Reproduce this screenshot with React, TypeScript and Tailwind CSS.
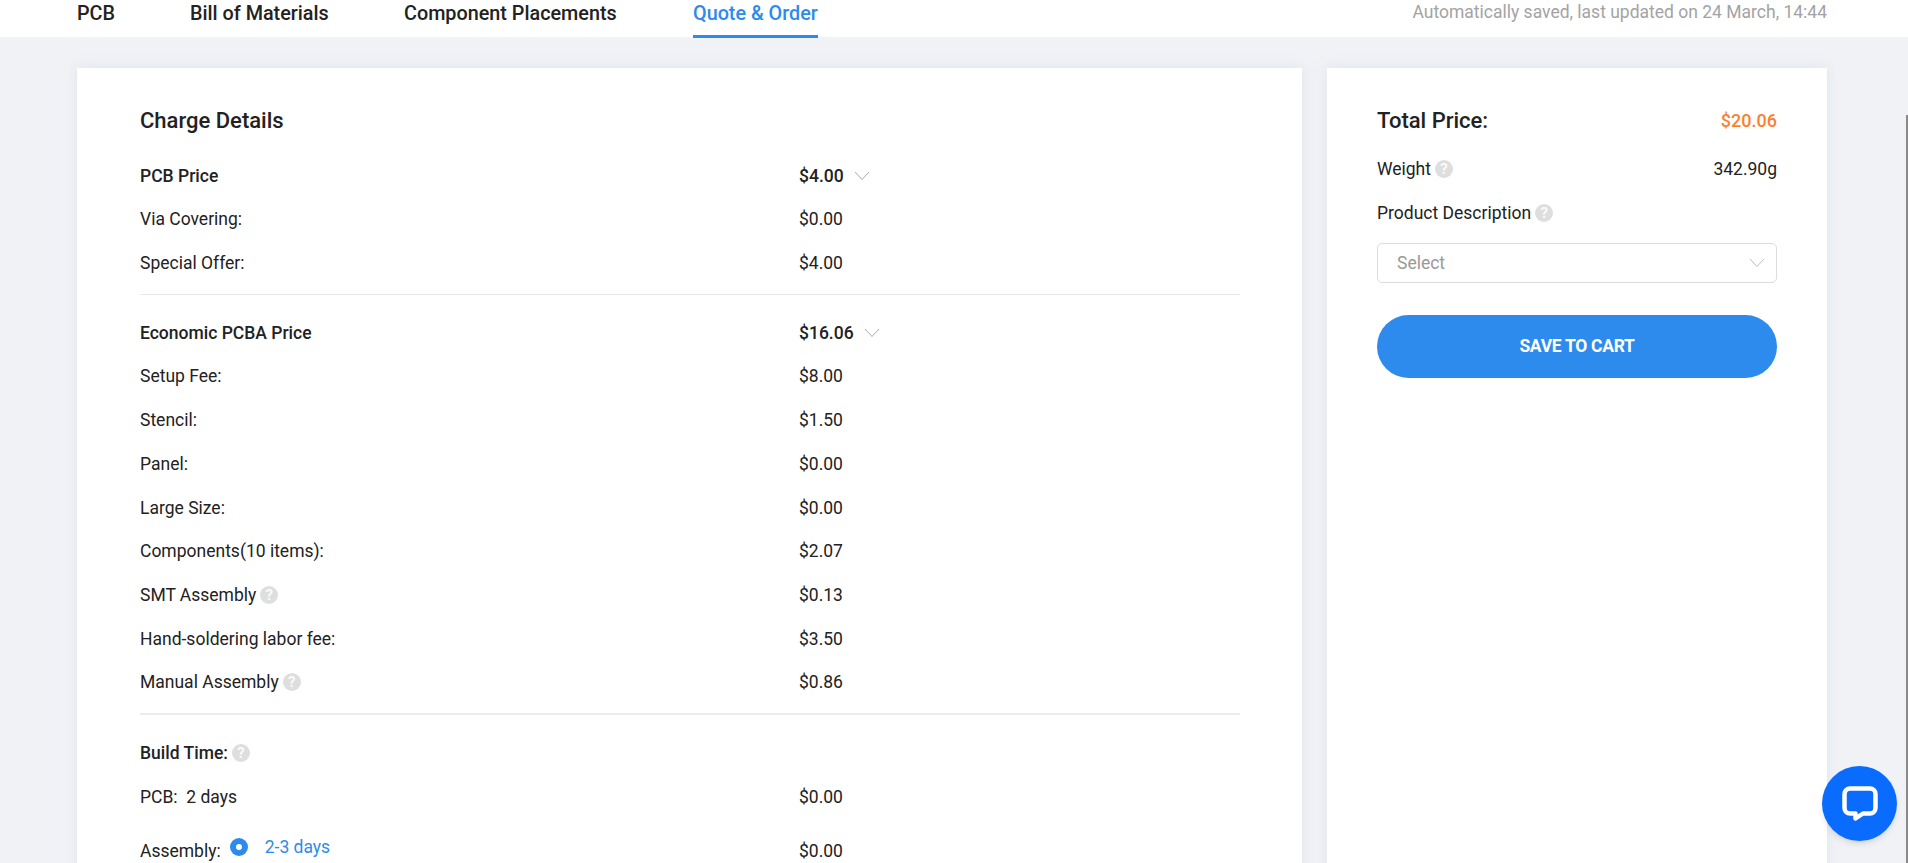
import React from 'react';

function Help() {
  return (
    <span className="inline-flex w-[18px] h-[18px] ml-[4px] rounded-full bg-[#dedede] text-[#fafafa] text-[15px] font-bold items-center justify-center leading-none">?</span>
  );
}

function Chevron({ color }: { color: string }) {
  return (
    <svg width="16" height="10" viewBox="0 0 16 10" fill="none" className="block">
      <path d="M1 1l7 7.5L15 1" stroke={color} strokeWidth="1" />
    </svg>
  );
}

function Row({ label, price, help, bold, open }: { label: string; price?: string; help?: boolean; bold?: boolean; open?: boolean }) {
  return (
    <div className={`flex items-center h-[43.7px] text-[17.5px] text-[#222] ${bold ? 'font-medium' : ''}`}>
      <div className="w-[659px] flex items-center whitespace-pre">
        {label}
        {help && <Help />}
      </div>
      {price && <div>{price}</div>}
      {open && <div className="ml-[10px]"><Chevron color="#aaaaaa" /></div>}
    </div>
  );
}

export default function App() {
  return (
    <div className="relative h-screen overflow-hidden bg-[#f0f2f6] font-['Roboto',sans-serif]">
      <div className="h-[37px] bg-white flex items-start justify-between pl-[77px] pr-[81px]">
        <div className="flex text-[19.8px] font-medium text-[#222] leading-[28px]">
          <div className="w-[113px]">PCB</div>
          <div className="w-[214px]">Bill of Materials</div>
          <div className="w-[289px]">Component Placements</div>
          <div className="h-[38px] text-[#2c8bec] border-b-[3px] border-[#2c8bec]">Quote &amp; Order</div>
        </div>
        <div className="text-[17.5px] text-[#a3a3a3] leading-[24px]">Automatically saved, last updated on 24 March, 14:44</div>
      </div>

      <div className="flex gap-[25px] pl-[77px] pt-[31px]">
        <div className="w-[1225px] h-[900px] bg-white shadow-[0_0_12px_rgba(200,205,220,0.4)] pl-[63px] pr-[62px] pt-[35px]">
          <div className="text-[22px] font-medium text-[#222] leading-[36px] mb-[15px]">Charge Details</div>
          <Row label="PCB Price" price="$4.00" bold open />
          <Row label="Via Covering:" price="$0.00" />
          <Row label="Special Offer:" price="$4.00" />
          <div className="h-[1px] bg-[#e8e8e8] mt-[9px] mb-[16px]" />
          <Row label="Economic PCBA Price" price="$16.06" bold open />
          <Row label="Setup Fee:" price="$8.00" />
          <Row label="Stencil:" price="$1.50" />
          <Row label="Panel:" price="$0.00" />
          <Row label="Large Size:" price="$0.00" />
          <Row label="Components(10 items):" price="$2.07" />
          <Row label="SMT Assembly" price="$0.13" help />
          <Row label="Hand-soldering labor fee:" price="$3.50" />
          <Row label="Manual Assembly" price="$0.86" help />
          <div className="h-[2px] bg-[#ececec] mt-[9px] mb-[16px]" />
          <Row label="Build Time:" help bold />
          <Row label="PCB:  2 days" price="$0.00" />
          <div className="flex items-center h-[64px] text-[17.5px] text-[#222]">
            <div className="w-[659px] flex items-center">
              Assembly:
              <span className="w-[18px] h-[18px] rounded-full bg-[#2c8bec] ml-[9px] -mt-[8px] flex items-center justify-center">
                <span className="w-[6px] h-[6px] rounded-full bg-white" />
              </span>
              <span className="ml-[17px] -mt-[8px] text-[#2c8bec]">2-3 days</span>
            </div>
            <div>$0.00</div>
          </div>
        </div>

        <div className="w-[500px] h-[900px] bg-white shadow-[0_0_12px_rgba(200,205,220,0.4)] px-[50px] pt-[34px]">
          <div className="flex items-center justify-between h-[36px]">
            <div className="text-[22px] font-medium text-[#222]">Total Price:</div>
            <div className="text-[18px] font-medium text-[#ff7f2a]">$20.06</div>
          </div>
          <div className="flex items-center justify-between h-[44px] mt-[9px] text-[17.5px] text-[#222]">
            <div className="flex items-center">Weight<Help /></div>
            <div>342.90g</div>
          </div>
          <div className="flex items-center h-[44px] text-[17.5px] text-[#222]">Product Description<Help /></div>
          <div className="h-[40px] mt-[8px] border border-[#dcdcdc] rounded-[5px] flex items-center justify-between pl-[19px] pr-[11px] text-[17.5px] text-[#999]">
            Select
            <Chevron color="#bbbbbb" />
          </div>
          <button className="w-full h-[63px] mt-[32px] rounded-full bg-[#2c8bec] text-white font-bold text-[17.5px] tracking-[-0.3px]">SAVE TO CART</button>
        </div>
      </div>

      <div className="absolute right-0 top-[115px] bottom-0 w-[2px] bg-[#8a8a8a]" />

      <button className="fixed left-[1822px] top-[766px] w-[75px] h-[75px] rounded-full bg-[#0a6cff] shadow-md flex items-center justify-center">
        <svg width="36" height="36" viewBox="0 0 36 36" fill="none">
          <path d="M8 2.5h20a5.5 5.5 0 0 1 5.5 5.5v14a5.5 5.5 0 0 1-5.5 5.5h-7l-7.5 5v-5H8A5.5 5.5 0 0 1 2.5 22V8A5.5 5.5 0 0 1 8 2.5z" stroke="white" strokeWidth="4.5" strokeLinejoin="round" />
        </svg>
      </button>
    </div>
  );
}
